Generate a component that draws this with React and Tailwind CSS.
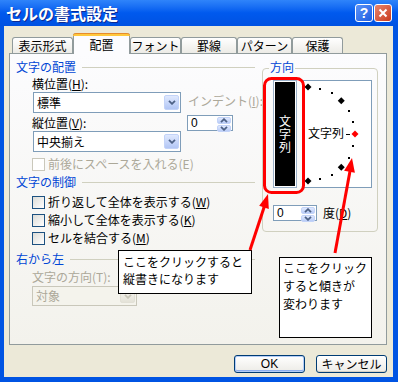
import React from "react";

const U = ({ children }) => <span className="underline underline-offset-[1px]">{children}</span>;

function Chevron({ up, color = "#4D6185" }) {
  return (
    <svg width="8" height="5" viewBox="0 0 8 5">
      <path d={up ? "M1 4.2 L4 1.2 L7 4.2" : "M1 0.8 L4 3.8 L7 0.8"} fill="none" stroke={color} strokeWidth="1.8" />
    </svg>
  );
}

function Select({ text, size, disabled }) {
  return (
    <div
      className={`flex items-center justify-between border ${size} ${
        disabled ? "border-[#C9C7BA] bg-[#F4F3EC] text-[#ACA899]" : "border-[#7F9DB9] bg-white text-black"
      }`}
    >
      <span className="pl-[3px]">{text}</span>
      <div
        className={`w-[15px] h-[calc(100%-4px)] mr-[1px] rounded-[2px] border flex items-center justify-center ${
          disabled
            ? "border-[#E2E0D6] bg-gradient-to-b from-[#F6F5EF] to-[#E4E2D8]"
            : "border-[#C3D3F8] bg-gradient-to-b from-[#E0E9FE] to-[#B2C6F5]"
        }`}
      >
        <Chevron color={disabled ? "#C9C7BA" : "#4D6185"} />
      </div>
    </div>
  );
}

function Spin({ size }) {
  return (
    <div className={`flex items-center justify-between border border-[#7F9DB9] bg-white ${size}`}>
      <span className="pl-[3px] font-['Liberation_Sans',sans-serif] text-[12px]">0</span>
      <div className="w-[15px] h-full py-[1px] pr-[1px] flex flex-col gap-[1px]">
        <div className="flex-1 rounded-[2px] bg-gradient-to-b from-[#E0E9FE] to-[#B8CBF6] border border-[#C3D3F8] flex items-center justify-center">
          <Chevron up />
        </div>
        <div className="flex-1 rounded-[2px] bg-gradient-to-b from-[#E0E9FE] to-[#B8CBF6] border border-[#C3D3F8] flex items-center justify-center">
          <Chevron />
        </div>
      </div>
    </div>
  );
}

function Check({ disabled }) {
  return (
    <div
      className={`w-[13px] h-[13px] shrink-0 border ${
        disabled ? "border-[#CAC8BB] bg-white" : "border-[#1C5180] bg-gradient-to-br from-[#DCDCD7] to-white"
      }`}
    />
  );
}

function Heading({ children, line = true }) {
  return (
    <div className="flex items-center h-[14px]">
      <span className="text-[#0046D5]">{children}</span>
      {line && <div className="flex-1 h-px bg-[#D0D0BF] ml-[6px] mt-[1px]" />}
    </div>
  );
}

function Tab({ label, w, active }) {
  if (active)
    return (
      <div className={`${w} h-[21px] relative z-10 flex flex-col border-x border-[#919B9C] rounded-t-[3px] bg-[#FCFCFE]`}>
        <div className="h-[3px] -mx-px rounded-t-[3px] bg-[#FFC83C] border-t border-[#E68B2C]" />
        <div className="flex-1 flex items-center justify-center">{label}</div>
      </div>
    );
  return (
    <div
      className={`${w} h-[16px] mb-[1px] border border-b-0 border-[#919B9C] rounded-t-[3px] bg-gradient-to-b from-white to-[#ECEBE6] flex items-center justify-center`}
    >
      {label}
    </div>
  );
}

function Diagram() {
  const cx = 4, cy = 53, r = 47;
  const diamonds = [-90, -45, 0, 45, 90];
  const dots = [-75, -60, -30, -15, 15, 30, 60, 75];
  const pt = (a) => [cx + r * Math.cos((a * Math.PI) / 180), cy + r * Math.sin((a * Math.PI) / 180)];
  return (
    <div className="relative w-[69px] h-[108px] border border-[#7F9DB9] bg-white">
      <svg className="absolute inset-0" width="67" height="106" viewBox="0 0 67 106">
        {dots.map((a) => {
          const [x, y] = pt(a);
          return <rect key={a} x={Math.round(x) - 1} y={Math.round(y) - 1} width="2" height="2" fill="#000" />;
        })}
        {diamonds.map((a) => {
          const [x, y] = pt(a);
          const s = 3.5;
          return (
            <polygon
              key={a}
              points={`${x},${y - s} ${x + s},${y} ${x},${y + s} ${x - s},${y}`}
              fill={a === 0 ? "#FF0000" : "#000"}
            />
          );
        })}
        <line x1="42" y1="53.5" x2="46" y2="53.5" stroke="#000" strokeWidth="1" />
      </svg>
      <span className="absolute left-[4px] top-[45px] leading-[14px] whitespace-nowrap">文字列</span>
    </div>
  );
}

export default function App() {
  return (
    <div className="relative w-[398px] h-[382px] bg-[#0054E3] flex flex-col overflow-hidden font-['Noto_Sans_CJK_JP',sans-serif] text-[12px] leading-[14px] text-black">
      {/* Title bar */}
      <div className="h-[26px] shrink-0 flex items-center pl-[6px] pr-[6px] bg-gradient-to-b from-[#2F84FA] via-[#0059EE] to-[#0052E2]">
        <span className="text-white font-bold text-[16px] leading-[18px] [text-shadow:1px_1px_0_#0B2A94]">セルの書式設定</span>
        <div className="flex-1" />
        <div className="w-[18px] h-[18px] rounded-[3px] border border-white bg-gradient-to-br from-[#5C93F8] to-[#1F5DE0] flex items-center justify-center text-white font-bold text-[14px] leading-[14px] font-['Liberation_Sans',sans-serif]">
          ?
        </div>
        <div className="w-[18px] h-[18px] ml-[1px] rounded-[3px] border border-white bg-gradient-to-br from-[#E9846A] to-[#C8381A] flex items-center justify-center">
          <svg width="10" height="10" viewBox="0 0 10 10">
            <path d="M1.5 1.5 L8.5 8.5 M8.5 1.5 L1.5 8.5" stroke="#fff" strokeWidth="2" />
          </svg>
        </div>
      </div>

      {/* Body */}
      <div className="flex-1 ml-[4px] mr-[5px] mb-[5px] bg-[#ECE9D8] flex flex-col pl-[5px] pr-[6px]">
        {/* Tabs */}
        <div className="mt-[7px] h-[21px] flex items-end pl-[3px] relative z-10">
          <Tab label="表示形式" w="w-[61px]" />
          <Tab label="配置" w="w-[57px]" active />
          <Tab label="フォント" w="w-[51px]" />
          <Tab label="罫線" w="w-[56px]" />
          <Tab label="パターン" w="w-[55px]" />
          <Tab label="保護" w="w-[51px]" />
        </div>

        {/* Panel */}
        <div className="-mt-px h-[292px] border border-[#919B9C] bg-gradient-to-b from-[#FCFCFE] to-[#F3F2EC] flex items-start">
          {/* Left column */}
          <div className="w-[245px] shrink-0 pl-[6px] flex flex-col">
            <div className="mt-[6px]">
              <Heading>文字の配置</Heading>
            </div>
            <div className="mt-[3px] ml-[16px] flex items-start">
              <div className="w-[149px] shrink-0 flex flex-col">
                <div className="h-[14px] whitespace-nowrap">
                  横位置(<U>H</U>):
                </div>
                <div className="mt-[1px] ml-[1px]">
                  <Select text="標準" size="w-[148px] h-[21px]" />
                </div>
                <div className="mt-[3px] h-[14px] whitespace-nowrap">
                  縦位置(<U>V</U>):
                </div>
                <div className="mt-[1px] ml-[1px]">
                  <Select text="中央揃え" size="w-[148px] h-[21px]" />
                </div>
              </div>
              <div className="ml-[6px] flex flex-col shrink-0">
                <div className="mt-[17px] ml-[1px] h-[14px] text-[#ACA899] whitespace-nowrap">
                  インデント(<U>I</U>):
                </div>
                <div className="mt-[7px]">
                  <Spin size="w-[46px] h-[16px]" />
                </div>
              </div>
            </div>
            <div className="mt-[5px] ml-[16px] h-[14px] flex items-center gap-[3px] text-[#ACA899] whitespace-nowrap">
              <Check disabled />
              <span>前後にスペースを入れる(E)</span>
            </div>

            <div className="mt-[4px]">
              <Heading>文字の制御</Heading>
            </div>
            <div className="mt-[6px] ml-[16px] h-[14px] flex items-center gap-[3px] whitespace-nowrap">
              <Check />
              <span>
                折り返して全体を表示する(<U>W</U>)
              </span>
            </div>
            <div className="mt-[4px] ml-[16px] h-[14px] flex items-center gap-[3px] whitespace-nowrap">
              <Check />
              <span>
                縮小して全体を表示する(<U>K</U>)
              </span>
            </div>
            <div className="mt-[4px] ml-[16px] h-[14px] flex items-center gap-[3px] whitespace-nowrap">
              <Check />
              <span>
                セルを結合する(<U>M</U>)
              </span>
            </div>

            <div className="mt-[7px]">
              <Heading>右から左</Heading>
            </div>
            <div className="mt-[4px] ml-[16px] h-[14px] text-[#ACA899] whitespace-nowrap">文字の方向(T):</div>
            <div className="mt-[2px] ml-[16px]">
              <Select text="対象" size="w-[105px] h-[20px]" disabled />
            </div>
          </div>

          {/* Right group: 方向 */}
          <div className="ml-[7px] mt-[6px] w-[116px] shrink-0 flex flex-col">
            <span className="self-start ml-[7px] px-[1px] h-[14px] relative z-10 bg-[#FBFBFB] text-[#0046D5]">方向</span>
            <div className="-mt-[6px] h-[164px] border border-[#D0D0BF] rounded-[4px] flex flex-col">
              <div className="mt-[11px] ml-[10px] flex items-start">
                <div className="w-[24px] h-[108px] border border-[#9BB0C8] bg-white p-px">
                  <div className="w-full h-full bg-black flex flex-col items-center justify-center text-white leading-[13px] pb-[2px]">
                    <span>文</span>
                    <span>字</span>
                    <span>列</span>
                  </div>
                </div>
                <div className="ml-[6px]">
                  <Diagram />
                </div>
              </div>
              <div className="mt-[17px] ml-[10px] flex items-center">
                <Spin size="w-[44px] h-[16px]" />
                <span className="ml-[6px] whitespace-nowrap">
                  度(<U>D</U>)
                </span>
              </div>
            </div>
          </div>
        </div>

        {/* Buttons */}
        <div className="mt-[10px] flex justify-end gap-[11px]">
          <div className="w-[71px] h-[18px] rounded-[3px] border border-[#003C74] bg-gradient-to-b from-white to-[#ECEBE6] shadow-[inset_0_0_0_1px_#B4CDF7,inset_0_-1px_0_1px_#8CAEF0] flex items-center justify-center font-['Liberation_Sans',sans-serif]">
            OK
          </div>
          <div className="w-[71px] h-[18px] rounded-[3px] border border-[#003C74] bg-gradient-to-b from-white to-[#ECEBE6] shadow-[inset_0_-1px_0_#D6D0C5] flex items-center justify-center">
            キャンセル
          </div>
        </div>
      </div>

      {/* Callouts */}
      <div className="absolute left-[118px] top-[250px] w-[134px] h-[44px] border border-black bg-white pl-[4px] pt-[2px] leading-[17px] whitespace-nowrap">
        ここをクリックすると
        <br />
        縦書きになります
      </div>
      <div className="absolute left-[279px] top-[257px] w-[93px] h-[81px] border border-black bg-white pl-[3px] pt-[1px] leading-[18px] whitespace-nowrap">
        ここをクリック
        <br />
        すると傾きが
        <br />
        変わります
      </div>

      {/* Red annotations */}
      <svg className="absolute inset-0 pointer-events-none" width="398" height="382" viewBox="0 0 398 382">
        <rect x="264.5" y="78.5" width="39" height="114" rx="7" fill="none" stroke="#FF0000" strokeWidth="3" />
        <line x1="250" y1="250" x2="264.5" y2="206" stroke="#FF0000" strokeWidth="3" />
        <polygon points="268,194 268.8,208.9 259.2,205.8" fill="#FF0000" />
        <line x1="335" y1="253" x2="350" y2="171" stroke="#FF0000" strokeWidth="3" />
        <polygon points="352,158 354.9,172.8 344.1,170.8" fill="#FF0000" />
      </svg>
    </div>
  );
}
